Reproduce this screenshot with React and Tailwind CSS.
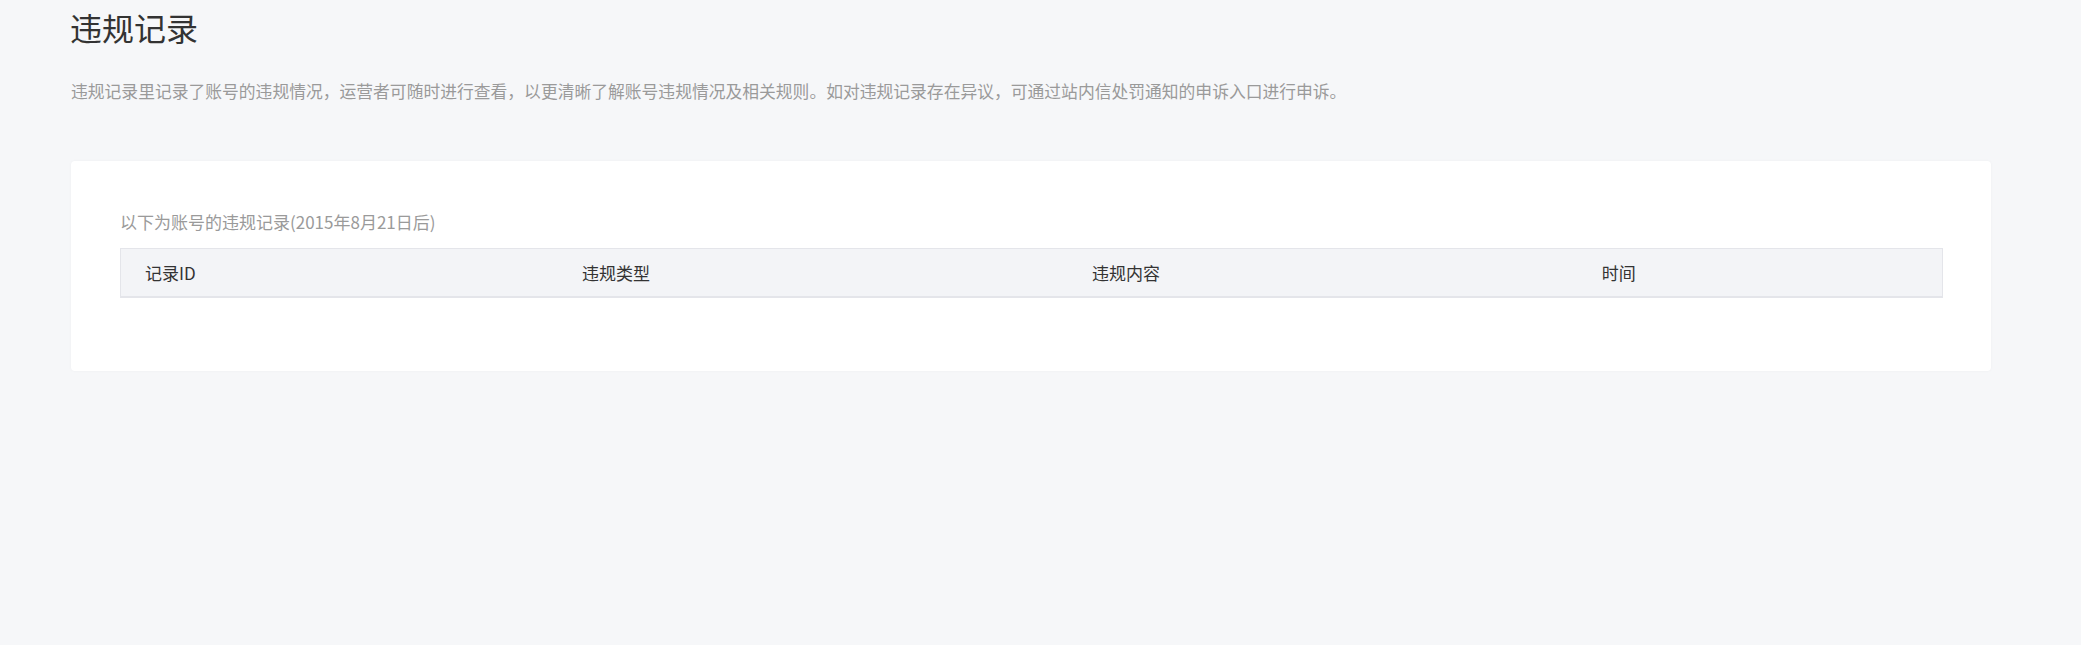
export default function App() {
  const font = { fontFamily: '"Noto Sans CJK SC", "Noto Sans", sans-serif' };
  const cols = [
    { label: "记录ID", w: "w-[24%]" },
    { label: "违规类型", w: "w-[28%]" },
    { label: "违规内容", w: "w-[28%]" },
    { label: "时间", w: "w-[20%]" },
  ];
  return (
    <div
      className="w-[2081px] h-[645px] bg-[#f6f7f9] pl-[71px] pt-[7px] overflow-hidden"
      style={font}
    >
      <h1 className="text-[32px] leading-[40px] text-[#333333] font-normal -ml-[1px]">违规记录</h1>
      <p className="mt-[32px] text-[16.8px] leading-[24px] text-[#9a9a9a]">
        违规记录里记录了账号的违规情况，运营者可随时进行查看，以更清晰了解账号违规情况及相关规则。如对违规记录存在异议，可通过站内信处罚通知的申诉入口进行申诉。
      </p>
      <div className="mt-[58px] w-[1920px] bg-white rounded-[4px] shadow-[0_0_3px_rgba(0,0,0,0.04)] pl-[49px] pr-[48px] pt-[49px] pb-[73px]">
        <div className="text-[17px] leading-[24px] text-[#9a9a9a]">
          以下为账号的违规记录(2015年8月21日后)
        </div>
        <div className="mt-[14px] flex h-[50px] items-center bg-[#f3f4f7] border border-[#e4e5ea] border-b-2">
          {cols.map((c) => (
            <div key={c.label} className={`${c.w} pl-[24px] text-[17px] text-[#333333]`}>
              {c.label}
            </div>
          ))}
        </div>
      </div>
    </div>
  );
}
